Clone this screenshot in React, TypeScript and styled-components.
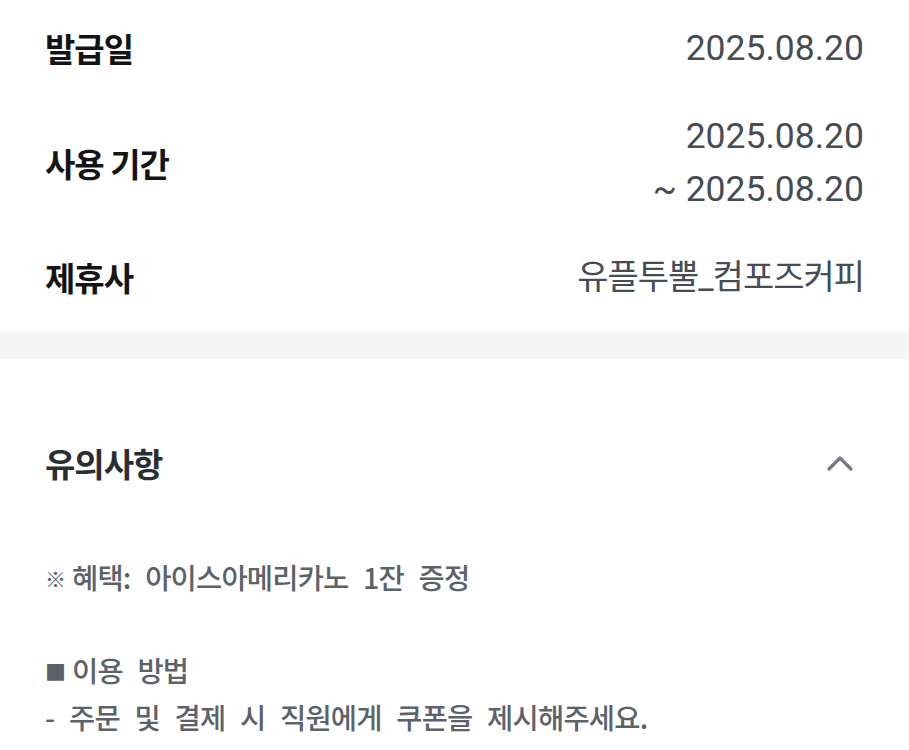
import React from 'react';
import styled, { createGlobalStyle } from 'styled-components';

const GlobalStyle = createGlobalStyle`
  html, body {
    margin: 0;
    padding: 0;
    background: #ffffff;
  }
  body {
    font-family: 'Roboto', 'Noto Sans CJK KR', sans-serif;
    -webkit-font-smoothing: antialiased;
  }
`;

const Page = styled.div`
  width: 909px;
  min-height: 750px;
  background: #ffffff;
  overflow: hidden;
`;

const InfoList = styled.div`
  display: flex;
  flex-direction: column;
  gap: 35px;
  padding: 22px 45px 28px;
`;

const InfoRow = styled.div`
  display: flex;
  align-items: center;
  justify-content: space-between;
`;

const Label = styled.div`
  font-family: 'Noto Sans CJK KR', sans-serif;
  font-size: 33px;
  font-weight: 700;
  letter-spacing: -1px;
  line-height: 53px;
  color: #141414;
`;

const Value = styled.div<{ $numeric?: boolean }>`
  font-family: 'Roboto', 'Noto Sans CJK KR', sans-serif;
  font-size: ${(p) => (p.$numeric ? '35.5px' : '34px')};
  font-weight: 400;
  letter-spacing: ${(p) => (p.$numeric ? '0' : '-1px')};
  line-height: 53px;
  color: #464c53;
  text-align: right;
`;

const Divider = styled.div`
  height: 27px;
  background: #f5f5f5;
`;

const NoticeSection = styled.section`
  padding: 80px 45px 0;
`;

const NoticeHeader = styled.div`
  display: flex;
  align-items: center;
  justify-content: space-between;
  height: 48px;
`;

const NoticeTitle = styled.h3`
  margin: 0;
  font-family: 'Noto Sans CJK KR', sans-serif;
  font-size: 33px;
  font-weight: 700;
  letter-spacing: -1px;
  color: #2a2e33;
`;

const ToggleButton = styled.button`
  display: flex;
  align-items: center;
  justify-content: center;
  width: 40px;
  height: 40px;
  margin-right: 4px;
  padding: 0;
  border: none;
  background: none;
`;

const NoticeBody = styled.div`
  margin-top: 67px;
  font-family: 'Noto Sans CJK KR', sans-serif;
  font-size: 28.5px;
  font-weight: 500;
  letter-spacing: -0.8px;
  word-spacing: 9px;
  line-height: 46px;
  color: #5b6269;
`;

const NoticeLine = styled.div`
  min-height: 46px;
  white-space: pre;
`;

const Mark = styled.span`
  display: inline-block;
  font-size: 21px;
  font-weight: 700;
  letter-spacing: 0;
  margin-right: 6px;
  vertical-align: 2px;
`;

const ChevronUp = () => (
  <svg width="28" height="18" viewBox="0 0 28 18" fill="none">
    <path
      d="M3 15 L14 4 L25 15"
      stroke="#737a81"
      strokeWidth="3.2"
      strokeLinecap="round"
      strokeLinejoin="round"
    />
  </svg>
);

const notice: { mark?: string; text: string }[] = [
  { mark: '※', text: '혜택: 아이스아메리카노 1잔 증정' },
  { text: '' },
  { mark: '■', text: '이용 방법' },
  { text: '- 주문 및 결제 시 직원에게 쿠폰을 제시해주세요.' },
];

export default function App() {
  return (
    <Page>
      <GlobalStyle />
      <InfoList>
        <InfoRow>
          <Label>발급일</Label>
          <Value $numeric>2025.08.20</Value>
        </InfoRow>
        <InfoRow>
          <Label>사용 기간</Label>
          <Value $numeric>
            2025.08.20
            <br />~ 2025.08.20
          </Value>
        </InfoRow>
        <InfoRow>
          <Label>제휴사</Label>
          <Value>유플투뿔_컴포즈커피</Value>
        </InfoRow>
      </InfoList>
      <Divider />
      <NoticeSection>
        <NoticeHeader>
          <NoticeTitle>유의사항</NoticeTitle>
          <ToggleButton aria-label="접기">
            <ChevronUp />
          </ToggleButton>
        </NoticeHeader>
        <NoticeBody>
          {notice.map((l, i) => (
            <NoticeLine key={i}>
              {l.mark && <Mark>{l.mark}</Mark>}
              {l.text}
            </NoticeLine>
          ))}
        </NoticeBody>
      </NoticeSection>
    </Page>
  );
}
